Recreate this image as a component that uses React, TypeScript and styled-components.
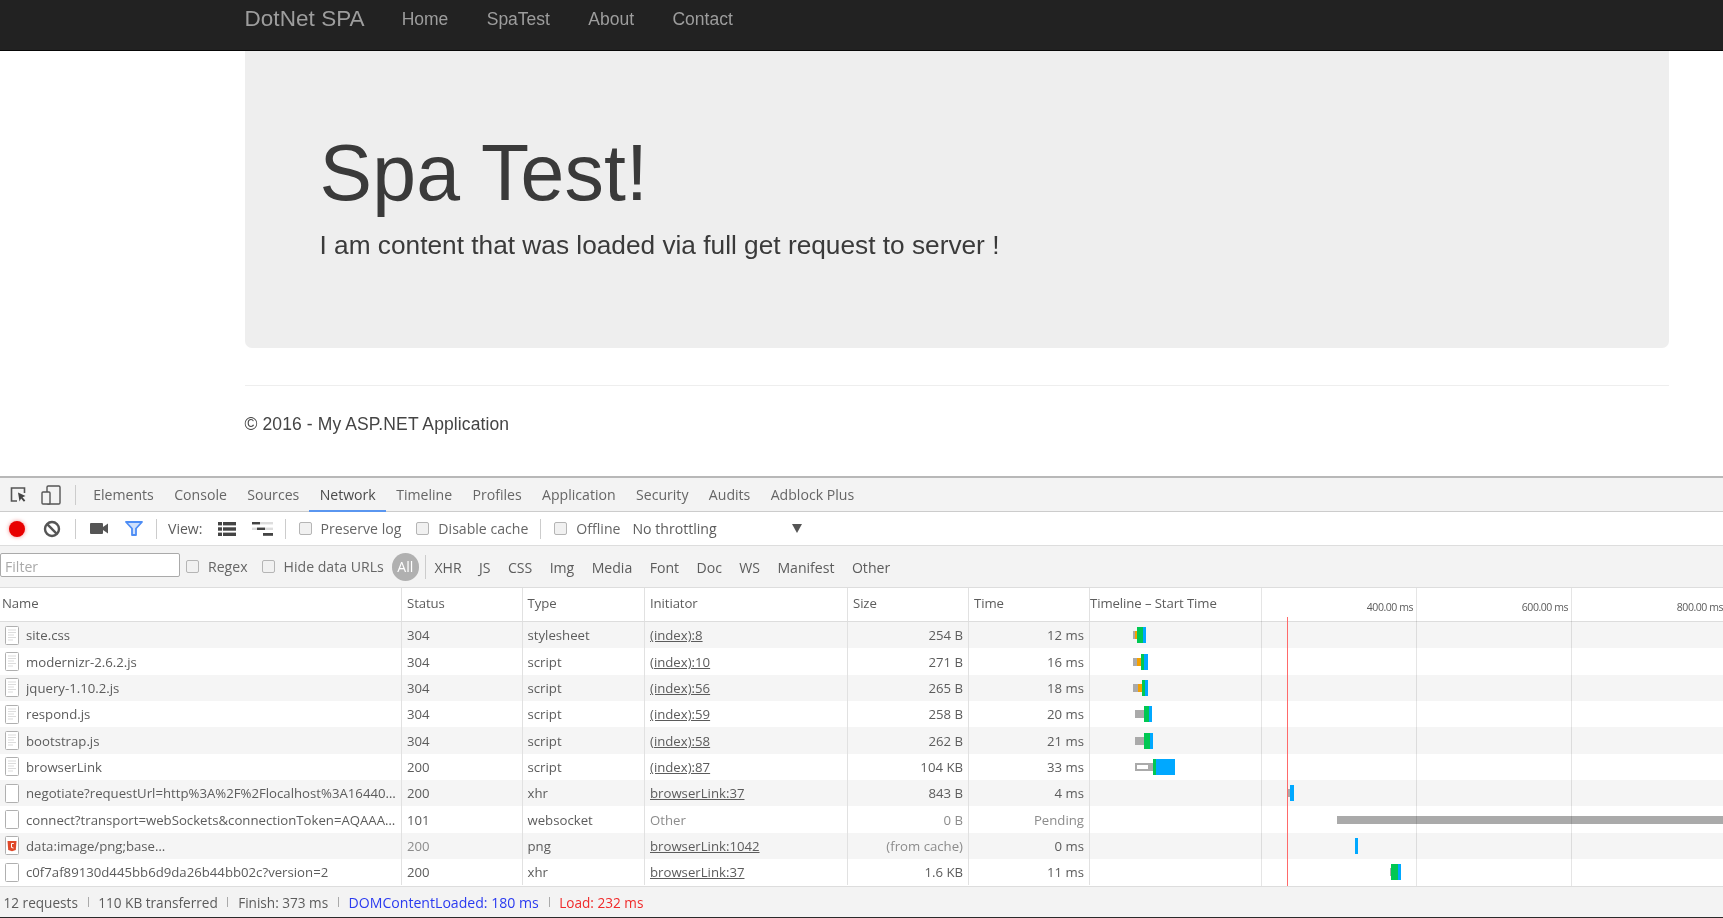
import React from 'react';
import styled, { createGlobalStyle } from 'styled-components';

const Global = createGlobalStyle`
  html, body { margin: 0; padding: 0; background: #fff; }
  body { font-family: "Liberation Sans", Arial, sans-serif; overflow: hidden; }
`;

const Page = styled.div`
  width: 1723px;
  height: 918px;
  overflow: hidden;
  display: flex;
  flex-direction: column;
  filter: blur(0.5px);
`;

/* ---------- site ---------- */
const Navbar = styled.nav`
  flex: none;
  height: 51px;
  box-sizing: border-box;
  background: #222;
  border-bottom: 1px solid #080808;
  display: flex;
  align-items: flex-start;
  padding: 7px 0 0 244.5px;
`;
const Brand = styled.span`
  font-size: 22.5px;
  line-height: 24px;
  letter-spacing: 0.05px;
  color: #9d9d9d;
  margin-right: 37px;
`;
const NavLink = styled.span`
  font-size: 17.5px;
  line-height: 24px;
  color: #9d9d9d;
  margin-right: 38.4px;
`;
const Site = styled.main`
  flex: none;
  height: 425px;
  padding: 0 54px 0 244.5px;
`;
const Jumbotron = styled.section`
  height: 296.5px;
  box-sizing: border-box;
  background: #eee;
  border-radius: 0 0 7px 7px;
  padding: 79px 76px 0 75px;
  color: #3a3a3a;
`;
const Title = styled.h1`
  margin: 0;
  font-weight: 400;
  font-size: 78.75px;
  line-height: 86px;
  letter-spacing: 0.2px;
`;
const Lead = styled.p`
  margin: 11px 0 0;
  font-size: 26.25px;
  line-height: 36px;
`;
const Rule = styled.hr`
  margin: 37.5px 0 0;
  border: 0;
  border-top: 1px solid #eee;
`;
const Footer = styled.footer`
  margin-top: 26px;
  font-size: 17.5px;
  line-height: 24px;
  letter-spacing: 0.11px;
  color: #444;
`;

/* ---------- devtools ---------- */
const Devtools = styled.section`
  flex: 1;
  min-height: 0;
  display: flex;
  flex-direction: column;
  background: #f3f3f3;
  border-top: 2px solid #b8b8b8;
  border-bottom: 1px solid #2a2a2a;
  font-family: "Open Sans", "Noto Sans", sans-serif;
  font-size: 14.1px;
  color: #5c5c5c;
`;
const TabBar = styled.div`
  flex: none;
  height: 33px;
  display: flex;
  align-items: stretch;
  border-bottom: 1px solid #ccc;
  padding-left: 9px;
`;
const IconSlot = styled.span<{ $w: number; $ml?: number }>`
  width: ${p => p.$w}px;
  margin-left: ${p => p.$ml ?? 0}px;
  display: flex;
  align-items: center;
  justify-content: center;
  flex: none;
`;
const Separator = styled.span<{ $h?: number; $ml?: number; $mr?: number }>`
  flex: none;
  align-self: center;
  width: 1px;
  height: ${p => p.$h ?? 20}px;
  margin: 0 ${p => p.$mr ?? 0}px 0 ${p => p.$ml ?? 0}px;
  background: #ccc;
`;
const Tab = styled.span<{ $active?: boolean }>`
  display: flex;
  align-items: center;
  padding: 0 10.2px;
  color: ${p => (p.$active ? '#4a4a4a' : '#666')};
  border-bottom: 2px solid ${p => (p.$active ? '#5a96f0' : 'transparent')};
  margin-bottom: -1px;
`;
const ActionBar = styled.div`
  flex: none;
  height: 33px;
  background: #fff;
  border-bottom: 1px solid #ddd;
  display: flex;
  align-items: center;
  padding-left: 9px;
`;
const Record = styled.span`
  flex: none;
  width: 16px;
  height: 16px;
  border-radius: 50%;
  background: #e80000;
  box-shadow: 0 0 4px rgba(230, 0, 0, 0.45);
`;
const Spaced = styled.span<{ $ml: number }>`
  margin-left: ${p => p.$ml}px;
  white-space: nowrap;
`;
const CheckRow = styled.label<{ $ml?: number }>`
  display: flex;
  align-items: center;
  gap: 9px;
  margin-left: ${p => p.$ml ?? 0}px;
  white-space: nowrap;
  color: #666;
`;
const Box = styled.span`
  flex: none;
  width: 11px;
  height: 11px;
  border: 1px solid #b5b5b5;
  border-radius: 2px;
  background: #f1f1f1;
`;
const Caret = styled.span`
  width: 0;
  height: 0;
  margin-left: 75px;
  border-left: 5px solid transparent;
  border-right: 5px solid transparent;
  border-top: 9px solid #555;
`;
const FilterBar = styled.div`
  flex: none;
  height: 41px;
  display: flex;
  align-items: center;
  border-bottom: 1px solid #ddd;
`;
const FilterInput = styled.div`
  flex: none;
  width: 180px;
  height: 24px;
  box-sizing: border-box;
  background: #fff;
  border: 1px solid #aaa;
  border-radius: 2px;
  padding-left: 4px;
  line-height: 25px;
  color: #aaa;
  margin-top: -3px;
`;
const AllPill = styled.span`
  flex: none;
  width: 27px;
  height: 28px;
  margin-left: 8px;
  border-radius: 14px;
  background: #b0b0b0;
  color: #fff;
  text-align: center;
  line-height: 28px;
`;
const TypeItem = styled.span`
  padding: 1px 8.7px 0;
  color: #5c5c5c;
`;
const Table = styled.div`
  flex: none;
  position: relative;
  height: 298px;
  background: #fff;
  overflow: hidden;
  font-size: 13.2px;
`;
const GRID = '402px 120.5px 122.5px 203px 121px 121px 1fr';
const HeaderRow = styled.div`
  display: grid;
  grid-template-columns: ${GRID};
  height: 34px;
  border-bottom: 1px solid #ddd;
  box-sizing: border-box;
`;
const Row = styled.div<{ $odd: boolean }>`
  display: grid;
  grid-template-columns: ${GRID};
  height: 26.35px;
  background: ${p => (p.$odd ? '#f5f5f5' : '#fff')};
`;
const Cell = styled.div<{ $right?: boolean; $muted?: boolean; $link?: boolean }>`
  display: flex;
  align-items: center;
  justify-content: ${p => (p.$right ? 'flex-end' : 'flex-start')};
  gap: 7px;
  min-width: 0;
  overflow: hidden;
  box-sizing: border-box;
  padding: 0 ${p => (p.$right ? 5 : 4.5)}px 0 5px;
  border-right: 1px solid #e1e1e1;
  white-space: nowrap;
  color: ${p => (p.$muted ? '#8c8c8c' : '#5c5c5c')};
  text-decoration: ${p => (p.$link ? 'underline' : 'none')};
`;
const HeadCell = styled.div<{ $inset?: number; $last?: boolean }>`
  display: flex;
  align-items: center;
  padding: 0 0 4px ${p => p.$inset ?? 5}px;
  border-right: ${p => (p.$last ? '0' : '1px solid #e1e1e1')};
  white-space: nowrap;
  color: #5c5c5c;
  letter-spacing: -0.1px;
`;
const NameText = styled.span`
  overflow: hidden;
  white-space: nowrap;
`;
const Track = styled.div`
  display: flex;
  align-items: center;
  overflow: hidden;
  position: relative;
`;
const TONES: Record<string, string> = {
  gray: '#aaaaaa',
  orange: '#f5a000',
  green: '#00c853',
  blue: '#00a8ff',
};
const Segment = styled.span<{ $tone: string; $tall: boolean }>`
  flex: none;
  height: ${p => (p.$tall ? 16 : 8)}px;
  background: ${p => TONES[p.$tone]};
`;
const HollowSegment = styled.span`
  flex: none;
  height: 8px;
  box-sizing: border-box;
  background: #fff;
  border: 2px solid #aaa;
  border-right: 0;
`;
const Overlay = styled.div`
  position: absolute;
  left: 1090px;
  right: -4px;
  top: 0;
  bottom: 0;
  display: grid;
  grid-template-columns: 171.5px 155.5px 155px 155px;
  pointer-events: none;
`;
const GridColumn = styled.div`
  border-right: 1px solid rgba(0, 0, 0, 0.1);
  font-family: "Open Sans", sans-serif;
  font-size: 10.5px;
  letter-spacing: -0.45px;
  color: #5c5c5c;
  text-align: right;
  padding: 12px 3px 0 0;
  white-space: nowrap;
`;
const RedLine = styled.span`
  position: absolute;
  left: 197px;
  top: 29px;
  bottom: 0;
  width: 1px;
  background: #ff6a6a;
`;
const StatusBar = styled.div`
  flex: 1;
  display: flex;
  align-items: center;
  padding-left: 3.5px;
  border-top: 1px solid #ddd;
  white-space: nowrap;
  font-size: 13.6px;
`;
const StatusText = styled.span<{ $color?: string; $wide?: boolean }>`
  color: ${p => p.$color ?? '#5c5c5c'};
  font-size: ${p => (p.$wide ? 14.1 : 13.6)}px;
`;
const StatusSep = styled.span`
  width: 1px;
  height: 10px;
  margin: 0 9.7px;
  background: #aaa;
`;

/* ---------- drawings ---------- */
const InspectIcon = () => (
  <svg width="19" height="17" viewBox="0 0 19 17" fill="none">
    <path d="M8 15H2.5V2h13v5" stroke="#555" strokeWidth="1.6" />
    <path d="M9 6.5l7.5 3.6-3 1.2 2.8 3.2-1.4 1.3-2.8-3.2-1.6 2.8z" fill="#444" />
  </svg>
);
const DeviceIcon = () => (
  <svg width="20" height="20" viewBox="0 0 20 20" fill="none" stroke="#555" strokeWidth="1.4">
    <rect x="6" y="1" width="13" height="18" rx="1.2" />
    <rect x="1" y="7" width="8" height="12" rx="1" fill="#f3f3f3" />
  </svg>
);
const BlockIcon = () => (
  <svg width="18" height="18" viewBox="0 0 18 18" fill="none" stroke="#555" strokeWidth="2.4">
    <circle cx="9" cy="9" r="7" />
    <path d="M4.2 4.2l9.6 9.6" />
  </svg>
);
const CameraIcon = () => (
  <svg width="18" height="11" viewBox="0 0 18 11" fill="#555">
    <rect x="0" y="0" width="13" height="11" rx="1" />
    <path d="M13 4l5-3.5v10L13 7z" />
  </svg>
);
const FunnelIcon = () => (
  <svg width="18" height="15" viewBox="0 0 18 15">
    <path d="M1 1h16l-6 6.5V14H7V7.5z" fill="#cfe0fb" stroke="#4d8df5" strokeWidth="1.8" strokeLinejoin="round" />
  </svg>
);
const ListIcon = () => (
  <svg width="18" height="14" viewBox="0 0 18 14" fill="#444">
    <rect x="0" y="0" width="4" height="3.4" />
    <rect x="5" y="0" width="13" height="3.4" />
    <rect x="0" y="5.3" width="4" height="3.4" />
    <rect x="5" y="5.3" width="13" height="3.4" />
    <rect x="0" y="10.6" width="4" height="3.4" />
    <rect x="5" y="10.6" width="13" height="3.4" />
  </svg>
);
const WaterfallIcon = () => (
  <svg width="21" height="14" viewBox="0 0 21 14">
    <rect x="0" y="0" width="21" height="2.4" fill="#ddd" />
    <rect x="0" y="0" width="8" height="2.4" fill="#444" />
    <rect x="0" y="5.6" width="21" height="2.4" fill="#ddd" />
    <rect x="5" y="5.6" width="8" height="2.4" fill="#444" />
    <rect x="11" y="11" width="10" height="2.8" fill="#444" />
  </svg>
);
const DocSvg = styled.svg`
  flex: none;
`;
const DocIcon = ({ kind }: { kind: 'lined' | 'blank' | 'png' }) => (
  <DocSvg width="14" height="19" viewBox="0 0 14 19">
    <rect x="0.5" y="0.5" width="13" height="18" rx="1" fill="#fff" stroke="#b0b0b0" />
    {kind === 'lined' && (
      <path d="M3 4h8M3 6.5h8M3 9h6M3 11.5h8M3 14h5" stroke="#dcdcdc" strokeWidth="1.1" />
    )}
    {kind === 'png' && (
      <>
        <path d="M2.5 5h9l-.7 9-3.8 1.2L3.2 14z" fill="#e0492a" />
        <path d="M8.8 7.5H6.5v4l2 .5" stroke="#fff" strokeWidth="1" fill="none" />
      </>
    )}
  </DocSvg>
);

/* ---------- data ---------- */
type Seg = [tone: string, from: number, to: number];
type Req = {
  name: string;
  icon: 'lined' | 'blank' | 'png';
  status: string;
  statusMuted?: boolean;
  type: string;
  init: string;
  initLink?: boolean;
  size: string;
  sizeMuted?: boolean;
  time: string;
  timeMuted?: boolean;
  segs: Seg[];
};
const requests: Req[] = [
  { name: 'site.css', icon: 'lined', status: '304', type: 'stylesheet', init: '(index):8', initLink: true, size: '254 B', time: '12 ms',
    segs: [['gray', 130, 135], ['orange', 135, 139], ['green', 139, 153], ['blue', 153, 160]] },
  { name: 'modernizr-2.6.2.js', icon: 'lined', status: '304', type: 'script', init: '(index):10', initLink: true, size: '271 B', time: '16 ms',
    segs: [['gray', 130, 140], ['orange', 140, 148], ['green', 148, 157], ['blue', 157, 167]] },
  { name: 'jquery-1.10.2.js', icon: 'lined', status: '304', type: 'script', init: '(index):56', initLink: true, size: '265 B', time: '18 ms',
    segs: [['gray', 130, 142], ['orange', 142, 151], ['green', 151, 158], ['blue', 158, 167]] },
  { name: 'respond.js', icon: 'lined', status: '304', type: 'script', init: '(index):59', initLink: true, size: '258 B', time: '20 ms',
    segs: [['gray', 133, 155], ['green', 155, 168], ['blue', 168, 176]] },
  { name: 'bootstrap.js', icon: 'lined', status: '304', type: 'script', init: '(index):58', initLink: true, size: '262 B', time: '21 ms',
    segs: [['gray', 133, 155], ['green', 155, 170], ['blue', 170, 178]] },
  { name: 'browserLink', icon: 'lined', status: '200', type: 'script', init: '(index):87', initLink: true, size: '104 KB', time: '33 ms',
    segs: [['hollow', 133, 167], ['gray', 167, 179], ['green', 179, 185], ['blue', 185, 233]] },
  { name: 'negotiate?requestUrl=http%3A%2F%2Flocalhost%3A16440…', icon: 'blank', status: '200', type: 'xhr', init: 'browserLink:37', initLink: true, size: '843 B', time: '4 ms',
    segs: [['gray', 506, 511], ['green', 511, 513], ['blue', 513, 522]] },
  { name: 'connect?transport=webSockets&connectionToken=AQAAA…', icon: 'blank', status: '101', type: 'websocket', init: 'Other', size: '0 B', sizeMuted: true, time: 'Pending', timeMuted: true,
    segs: [['gray', 627, 1600]] },
  { name: 'data:image/png;base…', icon: 'png', status: '200', statusMuted: true, type: 'png', init: 'browserLink:1042', initLink: true, size: '(from cache)', sizeMuted: true, time: '0 ms',
    segs: [['blue', 670, 678]] },
  { name: 'c0f7af89130d445bb6d9da26b44bb02c?version=2', icon: 'blank', status: '200', type: 'xhr', init: 'browserLink:37', initLink: true, size: '1.6 KB', time: '11 ms',
    segs: [['gray', 755, 758], ['green', 758, 775], ['blue', 775, 782]] },
];

const ZOOM_TO_PX = 0.41;
const ORIGIN = 10 / ZOOM_TO_PX;

const Bars = ({ segs }: { segs: Seg[] }) => {
  const first = segs[0][1];
  return (
    <Track>
      {segs.map(([tone, from, to], i) => {
        const style: React.CSSProperties = {
          width: (to - from) * ZOOM_TO_PX,
          marginLeft: i === 0 ? (first - ORIGIN) * ZOOM_TO_PX : 0,
        };
        if (tone === 'hollow') return <HollowSegment key={i} style={style} />;
        const tall = tone === 'green' || tone === 'blue';
        return <Segment key={i} $tone={tone} $tall={tall} style={style} />;
      })}
    </Track>
  );
};

const tabs = ['Elements', 'Console', 'Sources', 'Network', 'Timeline', 'Profiles', 'Application', 'Security', 'Audits', 'Adblock Plus'];
const types = ['XHR', 'JS', 'CSS', 'Img', 'Media', 'Font', 'Doc', 'WS', 'Manifest', 'Other'];

export default function App() {
  return (
    <Page>
      <Global />
      <Navbar>
        <Brand>DotNet SPA</Brand>
        <NavLink>Home</NavLink>
        <NavLink>SpaTest</NavLink>
        <NavLink>About</NavLink>
        <NavLink>Contact</NavLink>
      </Navbar>
      <Site>
        <Jumbotron>
          <Title>Spa Test!</Title>
          <Lead>I am content that was loaded via full get request to server !</Lead>
        </Jumbotron>
        <Rule />
        <Footer>© 2016 - My ASP.NET Application</Footer>
      </Site>
      <Devtools>
        <TabBar>
          <IconSlot $w={19}><InspectIcon /></IconSlot>
          <IconSlot $w={45}><DeviceIcon /></IconSlot>
          <Separator $ml={2} $mr={7} />
          {tabs.map(t => (
            <Tab key={t} $active={t === 'Network'}>{t}</Tab>
          ))}
        </TabBar>
        <ActionBar>
          <Record />
          <IconSlot $w={36} $ml={9}><BlockIcon /></IconSlot>
          <Separator $ml={5} $mr={5} />
          <IconSlot $w={18} $ml={9}><CameraIcon /></IconSlot>
          <IconSlot $w={18} $ml={17}><FunnelIcon /></IconSlot>
          <Separator $ml={13} $mr={11} />
          <span>View:</span>
          <IconSlot $w={18} $ml={15}><ListIcon /></IconSlot>
          <IconSlot $w={21} $ml={16}><WaterfallIcon /></IconSlot>
          <Separator $ml={12} $mr={12} />
          <CheckRow $ml={1}><Box />Preserve log</CheckRow>
          <CheckRow $ml={15}><Box />Disable cache</CheckRow>
          <Separator $ml={12} $mr={12} />
          <CheckRow $ml={1}><Box />Offline</CheckRow>
          <Spaced $ml={12}>No throttling</Spaced>
          <Caret />
        </ActionBar>
        <FilterBar>
          <FilterInput>Filter</FilterInput>
          <CheckRow $ml={6}><Box />Regex</CheckRow>
          <CheckRow $ml={14}><Box />Hide data URLs</CheckRow>
          <AllPill>All</AllPill>
          <Separator $ml={6} $h={24} />
          {types.map(t => (
            <TypeItem key={t}>{t}</TypeItem>
          ))}
        </FilterBar>
        <Table>
          <HeaderRow>
            <HeadCell $inset={2}>Name</HeadCell>
            <HeadCell>Status</HeadCell>
            <HeadCell>Type</HeadCell>
            <HeadCell>Initiator</HeadCell>
            <HeadCell>Size</HeadCell>
            <HeadCell>Time</HeadCell>
            <HeadCell $inset={0} $last>Timeline – Start Time</HeadCell>
          </HeaderRow>
          {requests.map((r, i) => (
            <Row key={r.name} $odd={i % 2 === 0}>
              <Cell>
                <DocIcon kind={r.icon} />
                <NameText>{r.name}</NameText>
              </Cell>
              <Cell $muted={r.statusMuted}>{r.status}</Cell>
              <Cell>{r.type}</Cell>
              <Cell $link={r.initLink} $muted={!r.initLink}>{r.init}</Cell>
              <Cell $right $muted={r.sizeMuted}>{r.size}</Cell>
              <Cell $right $muted={r.timeMuted}>{r.time}</Cell>
              <Bars segs={r.segs} />
            </Row>
          ))}
          <Overlay>
            <GridColumn />
            <GridColumn>400.00 ms</GridColumn>
            <GridColumn>600.00 ms</GridColumn>
            <GridColumn>800.00 ms</GridColumn>
            <RedLine />
          </Overlay>
        </Table>
        <StatusBar>
          <StatusText>12 requests</StatusText>
          <StatusSep />
          <StatusText>110 KB transferred</StatusText>
          <StatusSep />
          <StatusText>Finish: 373 ms</StatusText>
          <StatusSep />
          <StatusText $color="#2a3af0" $wide>DOMContentLoaded: 180 ms</StatusText>
          <StatusSep />
          <StatusText $color="#f02a2a">Load: 232 ms</StatusText>
        </StatusBar>
      </Devtools>
    </Page>
  );
}
